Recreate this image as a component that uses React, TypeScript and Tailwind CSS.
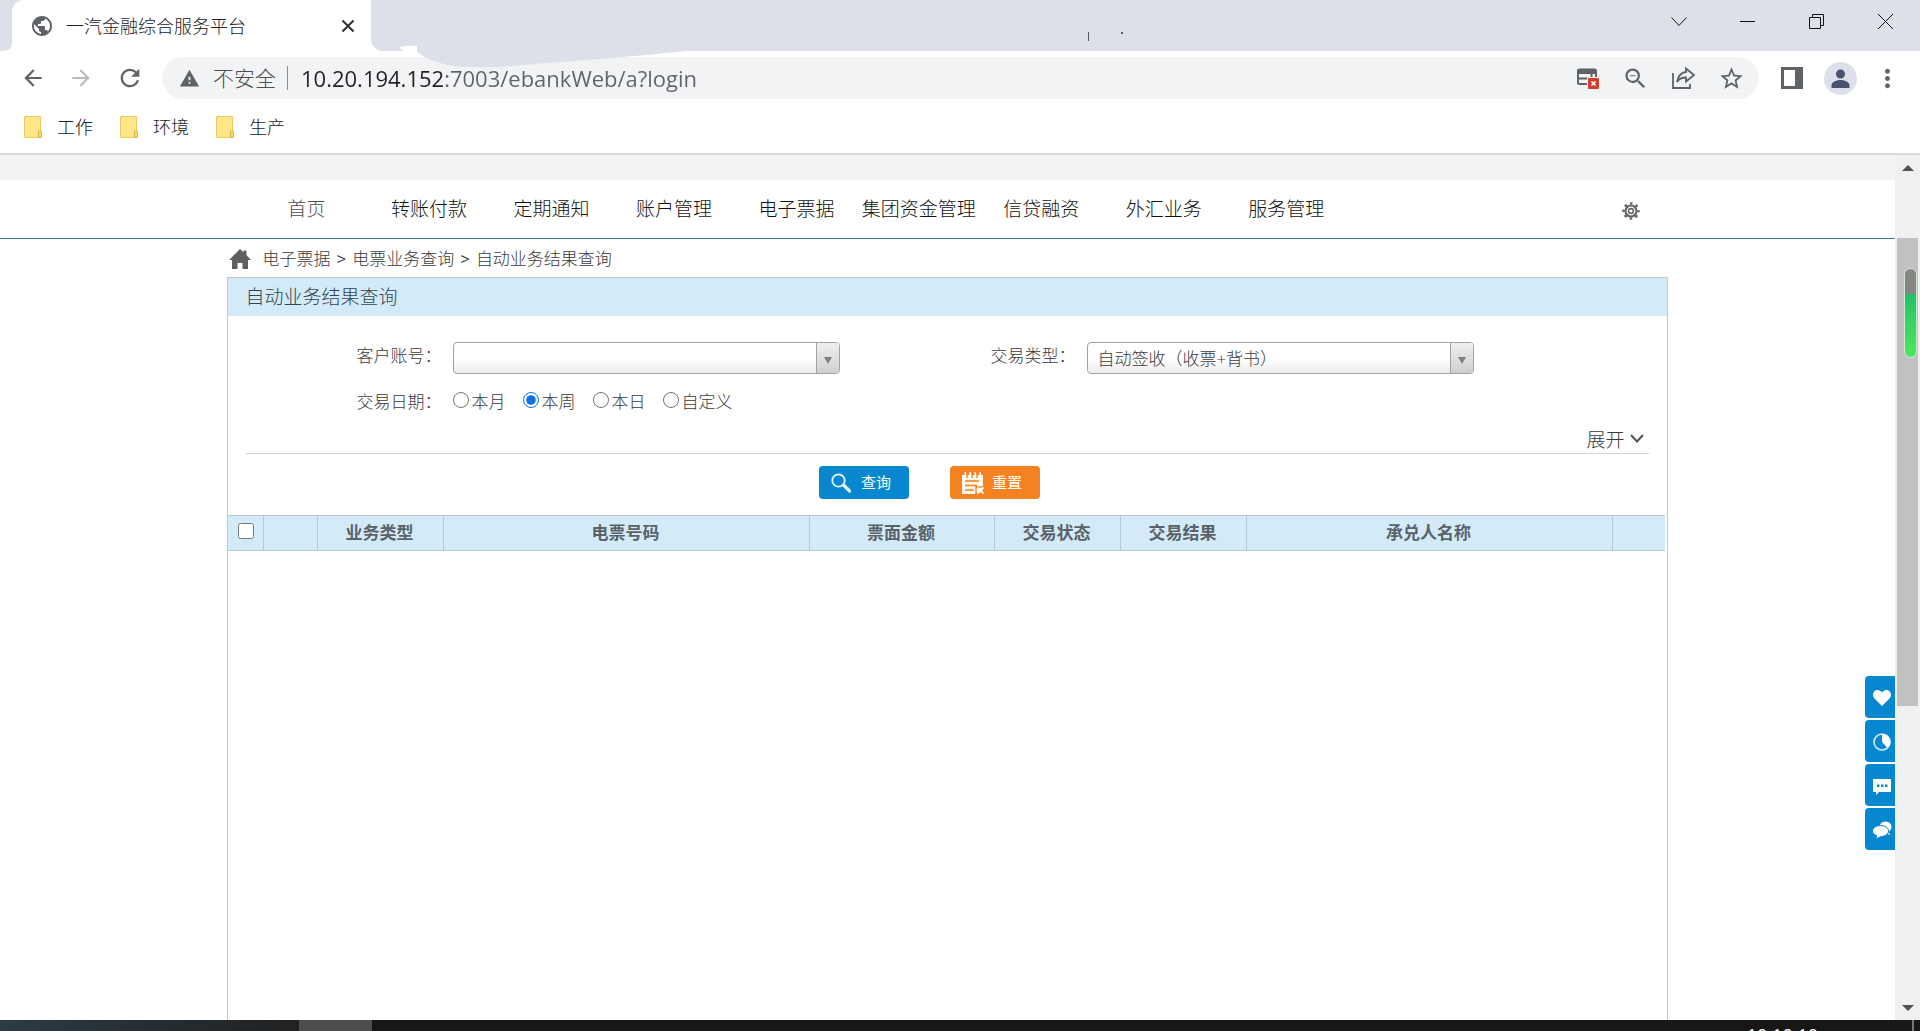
import { useState } from "react";
import type { ReactNode } from "react";
import {
  MdArrowBack,
  MdArrowForward,
  MdMoreVert,
  MdPublic,
  MdRefresh,
  MdStarBorder,
  MdWarning,
  MdZoomOut,
} from "react-icons/md";

const NAV_ITEMS = [
  "首页",
  "转账付款",
  "定期通知",
  "账户管理",
  "电子票据",
  "集团资金管理",
  "信贷融资",
  "外汇业务",
  "服务管理",
];

const BOOKMARKS = ["工作", "环境", "生产"];

const CRUMBS = ["电子票据", "电票业务查询", "自动业务结果查询"];

const DATE_RANGES = ["本月", "本周", "本日", "自定义"];

const COLUMNS = [
  { title: "", width: "w-[54px]" },
  { title: "业务类型", width: "w-[126px]" },
  { title: "电票号码", width: "w-[366px]" },
  { title: "票面金额", width: "w-[185px]" },
  { title: "交易状态", width: "w-[126px]" },
  { title: "交易结果", width: "w-[126px]" },
  { title: "承兑人名称", width: "w-[366px]" },
  { title: "", width: "w-[53px]" },
];

export default function App() {
  return (
    <div className="flex flex-col h-screen overflow-hidden bg-white font-light font-['Open_Sans','Noto_Sans_CJK_SC',sans-serif]">
      <TabStrip />
      <Toolbar />
      <BookmarkBar />
      <div className="flex flex-1 min-h-0">
        <div className="relative flex flex-col flex-1 min-w-0">
          <div className="h-[25px] shrink-0 bg-[#f3f3f3]" />
          <SiteNav />
          <div className="flex flex-col flex-1 w-[76%] mx-auto">
            <Breadcrumb />
            <QueryPanel />
          </div>
          <SideButtons />
        </div>
        <ScrollBar />
      </div>
      <Taskbar />
    </div>
  );
}

function TabStrip() {
  return (
    <div className="relative flex h-[51px] shrink-0">
      <div className="w-3 bg-[#dde0e8] rounded-br-lg" />
      <div className="w-[359px] bg-[#dde0e8]">
        <div className="flex items-center h-full pl-[18px] pr-4 bg-white rounded-tl-xl">
          <MdPublic className="size-6 text-[#5f6368]" />
          <span className="flex-1 ml-3 text-[18px] leading-6 text-[#202124]">一汽金融综合服务平台</span>
          <button aria-label="关闭标签页">
            <svg className="size-[14px]" viewBox="0 0 14 14" stroke="#2f3033" strokeWidth="2">
              <path d="M1.500 1.500l11 11M12.500 1.500l-11 11" />
            </svg>
          </button>
        </div>
      </div>
      <div className="flex flex-1 justify-end bg-[#dde0e8] rounded-bl-xl">
        <div className="flex items-start gap-[40px] pt-[7px] pr-[20px]">
          <WindowButton label="搜索标签页">
            <path d="M7.500 10.500l7.500 8 7.500-8" />
          </WindowButton>
          <WindowButton label="最小化">
            <path d="M7 14.500h15" />
          </WindowButton>
          <WindowButton label="还原">
            <path d="M7.500 10.500h11v11h-11zM10.500 10.500v-3h11v11h-3" />
          </WindowButton>
          <WindowButton label="关闭">
            <path d="M7 7l15 15M22 7l-15 15" />
          </WindowButton>
        </div>
      </div>
      {/* Uneven lower edge of the strip */}
      <svg className="absolute left-[396px] top-0 z-10 pointer-events-none" width="740" height="70" viewBox="0 0 740 70">
        <path d="M3 48c5-3 12-2 18-2v6H10z" fill="#fff" />
        <path d="M21 46v6c12 9 28 14 50 15 42 1 60-3 95-5 48-4 88-7 124-11V44H21z" fill="#dde0e8" />
        <path d="M692.500 32v9" stroke="#555a66" />
        <rect x="725" y="32" width="2" height="2" fill="#555a66" />
      </svg>
    </div>
  );
}

function WindowButton({ label, children }: { label: string; children: ReactNode }) {
  return (
    <button aria-label={label}>
      <svg className="size-[29px]" viewBox="0 0 29 29" fill="none" stroke="#111" strokeWidth="1">
        {children}
      </svg>
    </button>
  );
}

function Toolbar() {
  const [url, setUrl] = useState("10.20.194.152:7003/ebankWeb/a?login");

  return (
    <div className="flex items-center h-[54px] shrink-0 pl-5 pr-[18px] text-[#5f6368]">
      <div className="flex gap-[22px]">
        <button aria-label="后退"><MdArrowBack className="size-[26px]" /></button>
        <button aria-label="前进" className="text-[#b9bbbe]"><MdArrowForward className="size-[26px]" /></button>
        <button aria-label="重新加载"><MdRefresh className="size-[28px]" /></button>
      </div>
      <div className="flex items-center flex-1 h-[42px] ml-[18px] pl-[17px] pr-[14px] rounded-full bg-[#f2f3f5]">
        <MdWarning className="size-[21px]" />
        <span className="ml-[13px] text-[21px] leading-7 text-[#4a4d51]">不安全</span>
        <span className="w-px h-6 ml-[11px] bg-[#8a8d91]" />
        <input
          aria-label="地址"
          value={url}
          onChange={(e) => setUrl(e.target.value)}
          className="flex-1 ml-[13px] text-[22px] leading-7 font-normal outline-none text-transparent bg-clip-text bg-[linear-gradient(90deg,#202124_145px,#5f6368_145px)]"
        />
        <div className="flex items-center gap-[21px]">
          <button aria-label="弹出窗口已拦截">
            <svg className="size-[26px]" viewBox="0 0 26 26" fill="none">
              <path d="M3 8v10a1 1 0 0 0 1 1h8M3 13.500h11M16.500 8v4M21 8v4" stroke="#5f6368" strokeWidth="2" />
              <path d="M2 9V6A2.500 2.500 0 0 1 4.500 3.500h15A2.500 2.500 0 0 1 22 6v3z" fill="#5f6368" />
              <rect x="12.500" y="12.500" width="12" height="12" rx="1.500" fill="#d23f31" stroke="#f2f3f5" />
              <path d="M16.500 16.500l4 4M20.500 16.500l-4 4" stroke="#fff" strokeWidth="1.500" />
            </svg>
          </button>
          <button aria-label="缩小"><MdZoomOut className="size-[27px]" /></button>
          <button aria-label="分享">
            <svg className="size-[27px]" viewBox="0 0 27 27" fill="none" stroke="#5f6368" strokeWidth="1.800">
              <path d="M3 8v15h17v-4" />
              <path d="M16 3.500l8 6.500-8 6.500v-4c-4 0-7 1-9 4.500 1-6 4-9.500 9-10z" strokeLinejoin="miter" />
            </svg>
          </button>
          <button aria-label="收藏"><MdStarBorder className="size-[27px]" /></button>
        </div>
      </div>
      <div className="flex items-center ml-[22px]">
        <button aria-label="侧边栏">
          <svg className="size-[22px]" viewBox="0 0 22 22">
            <path d="M0 0h22v22H0zM3 3v16h11V3z" fill="#5f6368" fillRule="evenodd" />
          </svg>
        </button>
        <button aria-label="用户" className="ml-[21px]">
          <svg className="size-[33px]" viewBox="0 0 33 33">
            <circle cx="16.500" cy="16.500" r="16.500" fill="#dde0e8" />
            <circle cx="16.500" cy="12" r="4.500" fill="#4a5170" />
            <path d="M7.500 26v-2.500c0-4 6-5.500 9-5.500s9 1.500 9 5.500V26z" fill="#4a5170" />
          </svg>
        </button>
        <button aria-label="更多" className="ml-4"><MdMoreVert className="size-[29px]" /></button>
      </div>
    </div>
  );
}

function BookmarkBar() {
  return (
    <div className="flex items-center gap-[27px] h-[50px] shrink-0 pl-6 pb-1 border-b-2 border-[#d9d9d9]">
      {BOOKMARKS.map((name) => (
        <a key={name} href="#" className="flex items-center gap-[15px] text-[18px] leading-6 text-[#202124]">
          <svg className="w-[18px] h-[22px]" viewBox="0 0 18 22">
            <path d="M1 .5h15.500v15l1 1v5H.5V1z" fill="#ffe68a" stroke="#ecca62" />
            <path d="M14.500 21v-5.500c1-1.500 3-1 3 0v6z" fill="#fbd867" stroke="#e0b545" />
          </svg>
          {name}
        </a>
      ))}
    </div>
  );
}

function SiteNav() {
  return (
    <nav className="h-[59px] shrink-0 border-b border-[#3c788a]">
      <div className="flex items-center w-[76%] h-full mx-auto pl-[18px] pr-[28px]">
        <div className="grid grid-cols-9 w-[1102px]">
          {NAV_ITEMS.map((item, index) => (
            <a
              key={item}
              href="#"
              className={[
                "text-center text-[19px] leading-7 whitespace-nowrap",
                index === 0 ? "text-[#4d4d4d]" : "text-[#111]",
              ].join(" ")}
            >
              {item}
            </a>
          ))}
        </div>
        <button aria-label="设置" className="ml-auto mt-1">
          <svg className="size-[18px]" viewBox="0 0 18 18" fill="none" stroke="#666">
            <circle cx="9" cy="9" r="7.500" strokeWidth="2.400" strokeDasharray="2.600 3.290" strokeDashoffset="1.300" />
            <circle cx="9" cy="9" r="5.500" strokeWidth="2.200" />
            <circle cx="9" cy="9" r="2.400" strokeWidth="1.600" />
          </svg>
        </button>
      </div>
    </nav>
  );
}

function Breadcrumb() {
  return (
    <div className="flex items-center h-[38px] shrink-0 pl-[2px] pt-[2px] text-[17px] leading-6 text-[#3a3a3a]">
      <svg className="w-[22px] h-5 mr-[11px]" viewBox="0 0 22 20">
        <path d="M11 0l3.500 3.300V1.500h3v4.800L22 11h-3v9h-5.500v-6h-5v6H3v-9H0z" fill="#5d5f62" />
      </svg>
      {CRUMBS.map((crumb, index) => (
        <span key={crumb}>
          {index > 0 && <span className="mx-[6px] font-normal">&gt;</span>}
          {crumb}
        </span>
      ))}
    </div>
  );
}

function QueryPanel() {
  const [range, setRange] = useState("本周");

  return (
    <div className="flex flex-col flex-1 border border-b-0 border-[#c4c8ca]">
      <h1 className="h-[38px] shrink-0 pl-[17px] text-[19px] leading-[38px] font-light text-[#33444f] bg-[#d3ebf8]">
        自动业务结果查询
      </h1>

      <form className="px-[18px] pt-[26px]" onSubmit={(e) => e.preventDefault()}>
        <div className="flex pl-[110px] text-[17px] text-[#3a3a3a]">
          <SelectField id="account" label="客户账号：" options={[""]} />
          <SelectField id="type" label="交易类型：" options={["自动签收（收票+背书）"]} />
        </div>

        <fieldset className="flex items-center h-6 mt-4 pl-[110px] text-[17px] text-[#3a3a3a]">
          <legend className="float-left w-[97px] leading-6">交易日期：</legend>
          <div className="flex gap-[18px]">
            {DATE_RANGES.map((item) => (
              <label key={item} className="flex items-center gap-[2px] leading-6">
                <input
                  type="radio"
                  name="range"
                  className="size-4 mb-1 accent-[#0b72e7]"
                  checked={range === item}
                  onChange={() => setRange(item)}
                />
                {item}
              </label>
            ))}
          </div>
        </fieldset>

        <div className="flex justify-end mt-[14px] pr-[5px] border-b border-[#d4d4d4]">
          <button type="button" className="flex items-center gap-[5px] text-[19px] leading-[25px] text-[#3a3a3a]">
            展开
            <svg className="w-[14px] h-[9px] mb-1" viewBox="0 0 14 9" fill="none" stroke="#555" strokeWidth="2">
              <path d="M1 1l6 6.500L13 1" />
            </svg>
          </button>
        </div>

        <div className="flex justify-center gap-[41px] pt-3 pb-4 pr-9">
          <button className="flex items-center w-[90px] h-[33px] pl-3 gap-[10px] rounded bg-[#0787d0] text-[15px] font-normal text-white">
            <svg className="size-5" viewBox="0 0 20 20" fill="none" stroke="#e4f7ff">
              <circle cx="7.500" cy="7.500" r="6.200" strokeWidth="1.800" />
              <path d="M12.500 12l6 6" strokeWidth="3.200" strokeLinecap="round" />
            </svg>
            查询
          </button>
          <button type="reset" className="flex items-center w-[90px] h-[33px] pl-3 gap-[8px] rounded bg-[#f58220] text-[15px] font-normal text-white">
            <svg className="w-[22px] h-[22px]" viewBox="0 0 22 22" fill="none">
              <path d="M0 3h21v12l-5 7H0z" fill="#fff8ee" />
              <path d="M3 0l1 5M8 0l1 5M13 0l1 5M18 0l1 5" stroke="#fff8ee" strokeWidth="1.600" />
              <path d="M5 3v3M10 3v3M15 3v3M3 9h14M3 13.500h12M3 18h9M14 15h8v7h-8z" stroke="#f58220" strokeWidth="1.400" />
              <path d="M15.500 15.500l6 6M21.500 15.500l-6 6" stroke="#fff8ee" strokeWidth="2" />
            </svg>
            重置
          </button>
        </div>
      </form>

      <ResultTable />
    </div>
  );
}

type SelectFieldProps = {
  id: string;
  label: string;
  options: string[];
};

function SelectField({ id, label, options }: SelectFieldProps) {
  return (
    <div className="flex w-[634px]">
      <label htmlFor={id} className="w-[97px] leading-7">
        {label}
      </label>
      <div className="relative w-[387px] h-8">
        <select
          id={id}
          className="w-full h-full pt-[2px] pl-[9px] pr-8 border border-[#a3a3a3] rounded appearance-none bg-linear-to-b from-white from-50% to-[#ececec] text-[#3a3a3a]"
        >
          {options.map((option) => (
            <option key={option}>{option}</option>
          ))}
        </select>
        {/* Arrow cap over the right end */}
        <span className="absolute right-px top-px bottom-px flex items-center justify-center w-[23px] border-l border-[#a3a3a3] rounded-r-[3px] bg-linear-to-b from-[#f0f0f0] to-[#cfcfcf] pointer-events-none">
          <svg className="w-2 h-[7px] mt-1" viewBox="0 0 8 7">
            <path d="M0 0h8L4 7z" fill="#808080" />
          </svg>
        </span>
      </div>
    </div>
  );
}

function ResultTable() {
  return (
    <table className="w-[1437px] table-fixed border-collapse text-[17px] text-[#5a6268]">
      <thead>
        <tr className="h-[35px] bg-[#d3ebf8] border-y border-[#b9c7ce]">
          <th className="w-[35px] p-0 border-r border-[#b9c7ce]">
            <input type="checkbox" aria-label="全选" className="block size-4 mx-auto -mt-1" />
          </th>
          {COLUMNS.map((col, index) => (
            <th
              key={index}
              className={`${col.width} p-0 pr-[2px] font-bold leading-6 border-r border-[#b9c7ce] last:border-r-0`}
            >
              {col.title}
            </th>
          ))}
        </tr>
      </thead>
    </table>
  );
}

function SideButtons() {
  return (
    <div className="absolute right-0 top-[521px] flex flex-col gap-[2px]">
      <SideButton label="收藏">
        <path d="M10 18L2.500 10.500C-.5 7 1.500 2 5.500 2c2 0 3.500 1 4.500 2.500C11 3 12.500 2 14.500 2c4 0 6 5 3 8.500z" fill="#fff" />
      </SideButton>
      <SideButton label="统计">
        <circle cx="10" cy="10" r="8" fill="none" stroke="#c9ecff" strokeWidth="1.600" />
        <path d="M10 2a8 8 0 0 1 5.500 14L10 10z" fill="#fff" />
      </SideButton>
      <SideButton label="消息">
        <path d="M1 3h18v13H7l-3 3v-3H1z" fill="#fff" />
        <path d="M5 8.500h2.500v2.500H5zM9 8.500h2.500v2.500H9zM13 8.500h2.500v2.500H13z" fill="#0787d0" />
      </SideButton>
      <SideButton label="客服">
        <ellipse cx="13.500" cy="7" rx="6" ry="5.500" fill="#fff" />
        <path d="M15 11l3.500 4-6-2z" fill="#fff" />
        <path d="M8.500 5.500c4.500 0 8 2.500 8 5.500s-3.500 5.500-7.500 5.500L4 19l.5-3.500C2 14.500.5 13 .5 11c0-3 3.500-5.500 8-5.500z" fill="#fff" stroke="#0787d0" />
      </SideButton>
    </div>
  );
}

function SideButton({ label, children }: { label: string; children: ReactNode }) {
  return (
    <button aria-label={label} className="flex items-center justify-end w-[30px] h-[42px] pt-[2px] pr-[3px] rounded-l bg-[#0787d0]">
      <svg className="size-5" viewBox="0 0 20 20">
        {children}
      </svg>
    </button>
  );
}

function ScrollBar() {
  return (
    <div className="flex flex-col items-center w-[25px] pt-[10px] pb-[9px] bg-[#f0f0f0]">
      <svg width="12" height="6" viewBox="0 0 12 6">
        <path d="M6 0l6 6H0z" fill="#505050" />
      </svg>
      <div className="flex-1 w-[21px] pt-[67px]">
        <div className="flex justify-end h-[61%] pt-[30px] pr-px bg-[#c1c1c1]">
          <div className="w-[13px] h-[90px] border border-[#d6e6d4] rounded-full bg-linear-to-b from-[#868686] from-28% via-[#22c268] via-28% to-[#4ee65c]" />
        </div>
      </div>
      <svg width="12" height="6" viewBox="0 0 12 6">
        <path d="M0 0h12L6 6z" fill="#505050" />
      </svg>
    </div>
  );
}

function Taskbar() {
  return (
    <div className="flex h-[11px] shrink-0 overflow-hidden bg-[#171717]">
      <div className="w-[299px] bg-linear-to-r from-[#2b3b45] to-[#202122]" />
      <div className="w-[73px] bg-[#4d4d4d]" />
      <div className="flex-1 pt-[3px] pr-[94px] text-right text-[18px] leading-6 font-normal text-white">10:10:10</div>
      <div className="w-[2px] mr-[6px] bg-[#777]" />
    </div>
  );
}
